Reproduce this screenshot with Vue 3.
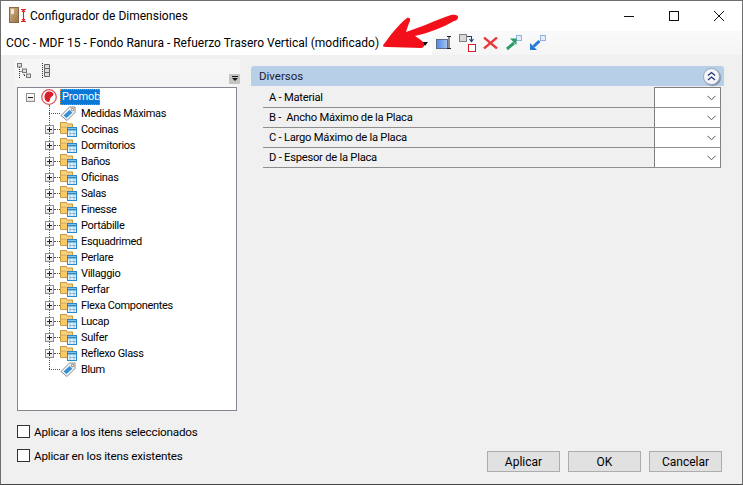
<script setup>
const folders = ['Cocinas','Dormitorios','Baños','Oficinas','Salas','Finesse','Portábille','Esquadrimed','Perlare','Villaggio','Perfar','Flexa Componentes','Lucap','Sulfer','Reflexo Glass']
const nodes = [
  { label: 'Medidas Máximas', kind: 'tag' },
  ...folders.map(label => ({ label, kind: 'folder' })),
  { label: 'Blum', kind: 'tag' }
]
const fields = ['A - Material', 'B -  Ancho Máximo de la Placa', 'C - Largo Máximo de la Placa', 'D - Espesor de la Placa']
</script>

<template>
  <div class="win">
    <header class="titlebar">
      <svg class="appicon" width="22" height="18" viewBox="0 0 22 18">
        <defs>
          <linearGradient id="wood" x1="0" y1="0" x2="1" y2="1">
            <stop offset="0" stop-color="#d9b88e"/>
            <stop offset="1" stop-color="#96703f"/>
          </linearGradient>
        </defs>
        <rect x="1.500" y="0.500" width="9" height="15" fill="url(#wood)" stroke="#8a6a44"/>
        <rect x="3" y="2" width="3" height="5" fill="#f1e8da"/>
        <path d="M13 2.500h5M13 14.500h5M15.500 2.500v12M14 5l1.500-2 1.500 2M14 12l1.500 2 1.500-2" fill="none" stroke="#e0202a" stroke-width="1.100"/>
      </svg>
      <span class="title">Configurador de Dimensiones</span>
      <div class="winbtns">
        <svg width="12" height="12" viewBox="0 0 12 12"><path d="M1 6.500h10" stroke="#111"/></svg>
        <svg width="12" height="12" viewBox="0 0 12 12"><rect x="1.500" y="1.500" width="9" height="9" fill="none" stroke="#111"/></svg>
        <svg width="12" height="12" viewBox="0 0 12 12"><path d="M1 1l10 10M11 1L1 11" stroke="#111" fill="none"/></svg>
      </div>
    </header>

    <div class="toolbar">
      <div class="docname">
        <span>COC - MDF 15 - Fondo Ranura - Refuerzo Trasero Vertical (modificado)</span>
        <i class="caret"></i>
      </div>
      <div class="tools">
        <svg width="16" height="14" viewBox="0 0 16 14">
          <defs>
            <linearGradient id="fieldblue" x1="0" y1="0" x2="1" y2="0">
              <stop offset="0" stop-color="#4f86e8"/>
              <stop offset="1" stop-color="#a9c6ef"/>
            </linearGradient>
          </defs>
          <rect x="0.500" y="3.500" width="11" height="9" fill="url(#fieldblue)" stroke="#5b6b88"/>
          <path d="M11 0.500h4M11 12.500h4M13 0.500v12" stroke="#222" fill="none"/>
        </svg>
        <svg width="17" height="18" viewBox="0 0 17 18">
          <rect x="0.500" y="0.500" width="7" height="7" fill="#d8d8d8" stroke="#808080"/>
          <rect x="9.500" y="10.500" width="7" height="7" fill="#fff" stroke="#d81f26"/>
          <path d="M8 2.500h4.500v4M10.500 5l2 2.500 2-2.500" fill="none" stroke="#1b3f7a" stroke-width="1.100"/>
        </svg>
        <svg width="15" height="12" viewBox="0 0 15 12"><path d="M1 0.500l13 11M14 0.500l-13 11" stroke="#e8383c" stroke-width="2.300" fill="none"/></svg>
        <svg width="17" height="16" viewBox="0 0 17 16">
          <rect x="11.500" y="0.500" width="5" height="5" fill="#e6eefb" stroke="#8fb2e0"/>
          <path d="M2 14l7-6" stroke="#2c9a68" stroke-width="3" fill="none"/>
          <path d="M5 3.500h6.500v6.500z" fill="#2c9a68"/>
        </svg>
        <svg width="17" height="16" viewBox="0 0 17 16">
          <rect x="11.500" y="0.500" width="5" height="5" fill="#e6eefb" stroke="#8fb2e0"/>
          <path d="M4.500 11.500l6-5.500" stroke="#2a78d6" stroke-width="3" fill="none"/>
          <path d="M1 8v7h7z" fill="#2a78d6"/>
        </svg>
      </div>
    </div>

    <main class="body">
      <section class="left">
        <div class="treebar">
          <svg width="16" height="16" viewBox="0 0 16 16">
            <path d="M2.500 4v11M2.500 8.500h4M7 9v4M7 12.500h3" stroke="#333" stroke-dasharray="1 1" fill="none"/>
            <rect x="0.500" y="0.500" width="4" height="3.500" fill="#ddd" stroke="#777"/>
            <rect x="5.500" y="6" width="4" height="3.500" fill="#ddd" stroke="#777"/>
            <rect x="9.500" y="11" width="4" height="3.500" fill="#ddd" stroke="#777"/>
          </svg>
          <svg class="t2" width="12" height="16" viewBox="0 0 12 16">
            <path d="M1.500 0v15" stroke="#333" stroke-dasharray="1 1" fill="none"/>
            <path d="M3.500 1.500h5v4h-5zM3.500 5.500h5v4h-5zM3.500 9.500h5v4h-5z" fill="#ddd" stroke="#666"/>
          </svg>
          <button class="overflow"><i></i><b></b></button>
        </div>

        <div class="tree">
          <i class="vline"></i>
          <div class="row root">
            <span class="exp root-exp"><i></i></span>
            <svg class="logo" width="16" height="16" viewBox="0 0 16 16">
              <circle cx="8" cy="8" r="7.300" fill="#fff" stroke="#e0525a" stroke-width="1.300"/>
              <path d="M3.500 8c0-3.500 2-5.500 5-5.500 2.500 0 4 1.500 4 2.500 0 1.500-1.500 2.500-2.500 3S9.500 11 8 13C5.500 13 3.500 11 3.500 8z" fill="#d91f2a"/>
            </svg>
            <span class="sel">Promob</span>
          </div>
          <div v-for="n in nodes" :key="n.label" class="row">
            <span v-if="n.kind === 'folder'" class="exp"><i></i><b></b></span>
            <span v-else class="hdot long"></span>
            <span v-if="n.kind === 'folder'" class="hdot"></span>
            <svg v-if="n.kind === 'folder'" class="nodeicon" width="17" height="16" viewBox="0 0 17 16">
              <path d="M0.500 3V1.500h6l1 1.500h5v8h-12z" fill="#f6d27e" stroke="#c99434"/>
              <path d="M1 5h11v2H1z" fill="#fff3cc"/>
              <path d="M0.500 12.500V6h12v6.500z" fill="#f9ca6c" stroke="#d19d3e"/>
              <rect x="7.500" y="6.500" width="9" height="9" fill="#e8f4fd" stroke="#2a8ac8"/>
              <path d="M7.500 8.500h9" stroke="#2a8ac8" stroke-width="2"/>
              <path d="M10 10v5M14 10v5M9 12.500h7" stroke="#8cbde0"/>
            </svg>
            <svg v-else class="nodeicon" width="17" height="16" viewBox="0 0 17 16">
              <path d="M1 10.500L9.500 2H15v5.500L7 15.500z" fill="#f4f4f4" stroke="#8a8a8a"/>
              <circle cx="12.500" cy="4.500" r="1.200" fill="#fff" stroke="#777"/>
              <path d="M3.500 10.500L9.500 5l3 2.500L6.500 13z" fill="#2f8fd8"/>
            </svg>
            <span class="label">{{ n.label }}</span>
          </div>
        </div>

        <label class="chk first"><i></i>Aplicar a los itens seleccionados</label>
        <label class="chk"><i></i>Aplicar en los itens existentes</label>
      </section>

      <section class="right">
        <div class="group">
          <span>Diversos</span>
          <span class="collapse">
            <svg width="9" height="10" viewBox="0 0 9 10"><path d="M1 4.500l3.500-3 3.500 3M1 9l3.500-3 3.500 3" fill="none" stroke="#21306f" stroke-width="1.200"/></svg>
          </span>
        </div>
        <div class="grid">
          <div v-for="f in fields" :key="f" class="prop">
            <span class="pname">{{ f }}</span>
            <span class="combo">
              <svg width="9" height="6" viewBox="0 0 9 6"><path d="M0.500 0.800l4 4 4-4" fill="none" stroke="#555"/></svg>
            </span>
          </div>
        </div>
        <div class="spacer"></div>
        <div class="actions">
          <button>Aplicar</button>
          <button>OK</button>
          <button>Cancelar</button>
        </div>
      </section>
    </main>

    <svg class="arrow" width="80" height="42" viewBox="0 0 80 42">
      <path d="M3 33C9 25 16 15 26 7C28 6 30 8 29 10C27 14 26 18 25 21C38 17 55 9 70 4C75 3 78 5 77 7C76 9 75 10 73 10C61 17 47 22 34 25C37 27 40 29 42 31C44 34 43 37 40 37C30 37 18 36 6 36C2 36 1 35 3 33Z" fill="#f2101a"/>
    </svg>
  </div>
</template>

<style>
html, body { margin: 0; background: #f0f0f0; overflow: hidden; }
</style>

<style scoped>
.win {
  position: relative;
  width: 743px;
  height: 485px;
  box-sizing: border-box;
  display: flex;
  flex-direction: column;
  background: #f0f0f0;
  border: 1px solid #6f6f6f;
  border-bottom-color: #444;
  font: 12px Roboto, "Noto Sans", sans-serif;
  color: #000;
  overflow: hidden;
}
.titlebar {
  height: 30px;
  background: #fff;
  display: flex;
  align-items: center;
  padding-left: 7px;
  flex: none;
}
.title { font-size: 12px; }
.winbtns {
  margin-left: auto;
  display: flex;
  gap: 33px;
  padding-right: 17px;
}
.toolbar {
  height: 24px;
  flex: none;
  display: flex;
  align-items: center;
  background: linear-gradient(#fafafa, #f5f5f5);
}
.docname {
  width: 431px;
  height: 24px;
  box-sizing: border-box;
  background: #fff;
  display: flex;
  align-items: center;
  padding-left: 5px;
  position: relative;
  font-size: 12px;
}
.caret {
  position: absolute;
  right: 4px;
  top: 11px;
  border: 3.500px solid transparent;
  border-top: 4px solid #111;
  border-bottom: 0;
}
.tools {
  display: flex;
  align-items: center;
  gap: 7px;
  padding-left: 4px;
}
.body {
  flex: 1;
  display: flex;
  min-height: 0;
}
.left {
  width: 250px;
  flex: none;
  padding: 4px 0 0 13px;
  box-sizing: border-box;
}
.treebar {
  width: 226px;
  height: 28px;
  box-sizing: border-box;
  background: linear-gradient(#f7f7f7, #f3f3f3);
  position: relative;
  display: flex;
  align-items: flex-start;
  padding: 4px 0 0 3px;
  gap: 8px;
  border-radius: 3px;
}
.overflow {
  position: absolute;
  right: 0;
  bottom: 3px;
  width: 11px;
  height: 10px;
  padding: 0;
  border: 0;
  background: #c4c4c4;
}
.overflow i, .overflow b { position: absolute; display: block; }
.overflow i { left: 3px; top: 2px; width: 6px; height: 1px; background: #111; }
.overflow b { left: 3px; top: 4px; border: 3px solid transparent; border-top: 3px solid #111; border-bottom: 0; }
.tree {
  position: relative;
  width: 220px;
  height: 324px;
  margin-left: 3px;
  box-sizing: border-box;
  background: #fff;
  border: 1px solid #828790;
  padding-top: 1px;
  font-size: 11px;
  letter-spacing: -0.330px;
}
.vline {
  position: absolute;
  left: 31px;
  top: 17px;
  height: 264px;
  border-left: 1px dotted #555;
}
.row {
  position: relative;
  height: 16px;
  display: flex;
  align-items: center;
  padding-left: 27px;
}
.root { padding-left: 8px; }
.exp {
  position: relative;
  width: 7px;
  height: 7px;
  flex: none;
  background: linear-gradient(#fff, #e4e4e4);
  border: 1px solid #8f8f8f;
  z-index: 1;
}
.exp i, .exp b { position: absolute; background: #222; display: block; }
.exp i { left: 1px; top: 3px; width: 5px; height: 1px; }
.exp b { left: 3px; top: 1px; width: 1px; height: 5px; }
.root-exp { margin-right: 6px; }
.hdot {
  width: 6px;
  border-top: 1px dotted #555;
  flex: none;
}
.hdot.long { width: 11px; margin-left: 4px; }
.nodeicon { flex: none; }
.logo { flex: none; }
.sel {
  margin-left: 3px;
  width: 40px;
  padding: 0 2px;
  height: 16px;
  line-height: 16px;
  box-sizing: border-box;
  background: #0a78d7;
  color: #fff;
  letter-spacing: -0.100px;
  outline: 1px dotted #e08a1e;
  outline-offset: -1px;
}
.label { margin-left: 4px; white-space: nowrap; }
.chk {
  display: flex;
  align-items: center;
  height: 13px;
  margin-top: 11px;
  margin-left: 3px;
  font-size: 11.700px;
  letter-spacing: -0.200px;
}
.chk.first { margin-top: 14px; }
.chk i {
  width: 11px;
  height: 11px;
  background: #fff;
  border: 1px solid #333;
  margin-right: 4px;
  flex: none;
}
.right {
  flex: 1;
  min-width: 0;
  display: flex;
  flex-direction: column;
  padding: 11px 18px 12px 0;
}
.group {
  height: 20px;
  background: #b8cfe8;
  display: flex;
  align-items: center;
  justify-content: space-between;
  padding: 0 4px 0 8px;
  border-radius: 3px 3px 0 0;
  color: #1b1b33;
  font-size: 11.500px;
}
.collapse {
  width: 15px;
  height: 15px;
  border-radius: 50%;
  background: #f4f6fa;
  border: 1px solid #9aa7b8;
  box-shadow: 1px 1px 1px #7e8ea4;
  display: flex;
  align-items: center;
  justify-content: center;
}
.grid { margin: 1px 3px 0 12px; font-size: 11.200px; letter-spacing: -0.240px; }
.prop {
  height: 20px;
  box-sizing: border-box;
  display: flex;
  border-bottom: 1px solid #8e8e8e;
}
.prop:first-child { height: 21px; }
.pname {
  flex: 1;
  padding-left: 6px;
  align-self: flex-end;
  line-height: 19px;
  white-space: pre;
}
.combo {
  width: 67px;
  flex: none;
  box-sizing: border-box;
  background: #fff;
  border: 1px solid #808080;
  border-bottom: 0;
  display: flex;
  align-items: center;
  justify-content: flex-end;
  padding-right: 4px;
}
.prop:not(:first-child) .combo { border-top: 0; }
.spacer { flex: 1; }
.actions {
  display: flex;
  gap: 8px;
  justify-content: flex-end;
  margin-right: 2px;
}
.actions button {
  width: 73px;
  height: 21px;
  padding: 0;
  font: inherit;
  color: #000;
  background: #e1e1e1;
  border: 1px solid #adadad;
}
.arrow {
  position: absolute;
  left: 380px;
  top: 10px;
}
</style>
